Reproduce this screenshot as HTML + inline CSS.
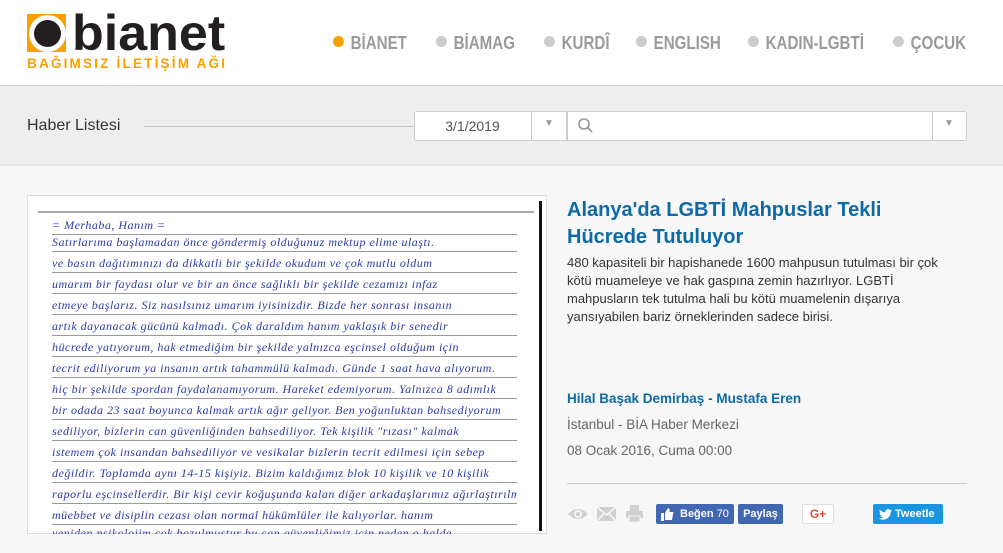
<!DOCTYPE html>
<html><head><meta charset="utf-8"><style>
*{margin:0;padding:0;box-sizing:border-box}
body{width:1003px;height:553px;overflow:hidden;background:#f7f7f7;font-family:"Liberation Sans",sans-serif;position:relative}
.hdr{position:absolute;left:0;top:0;width:1003px;height:86px;background:#fff;border-bottom:1px solid #d0d0d0}
.band{position:absolute;left:0;top:86px;width:1003px;height:80px;background:#eeeeee;border-bottom:2px solid #e2e2e2}
.nav{position:absolute;top:33px;font-weight:bold;font-size:18px;color:#9a9a9a;white-space:nowrap;line-height:20px;transform:scaleX(.84);transform-origin:left}
.nav:before{content:"";display:inline-block;width:13px;height:11px;border-radius:50%;background:#ccc;margin-right:8px;vertical-align:2px}
.nav.on:before{background:#f7a000}
.abs{position:absolute}
.hand{position:absolute;left:52px;width:465px;font-family:"Liberation Serif",serif;font-style:italic;font-size:12px;color:#2a3aa8;border-bottom:1px solid #999;height:17px;line-height:14px;white-space:nowrap;overflow:hidden;letter-spacing:.5px}
.btn{position:absolute;top:504px;height:20px;border-radius:2px;font-size:11px;font-weight:bold;color:#fff;line-height:20px}
</style></head><body>
<div class="hdr"></div>
<div class="abs" style="left:27px;top:14px;width:39px;height:38px;background:#f7a000"></div>
<div class="abs" style="left:29px;top:15px;width:37px;height:37px;border-radius:50%;background:#fff"></div>
<div class="abs" style="left:34px;top:20px;width:27px;height:27px;border-radius:50%;background:#231f20"></div>
<div class="abs" style="left:72px;top:8px;font-size:50px;line-height:50px;color:#231f20;font-weight:bold;transform:scaleX(1.04);transform-origin:left">bianet</div>
<div class="abs" style="left:27px;top:56px;font-size:13.5px;font-weight:bold;color:#f7a000;letter-spacing:2.2px;line-height:16px;white-space:nowrap">BAĞIMSIZ İLETİŞİM AĞI</div>
<div class="nav on" style="left:333px">BİANET</div>
<div class="nav" style="left:436px">BİAMAG</div>
<div class="nav" style="left:544px">KURDÎ</div>
<div class="nav" style="left:636px">ENGLISH</div>
<div class="nav" style="left:748px">KADIN-LGBTİ</div>
<div class="nav" style="left:893px">ÇOCUK</div>
<div class="band"></div>
<div class="abs" style="left:27px;top:117px;font-size:16px;color:#333">Haber Listesi</div>
<div class="abs" style="left:144px;top:126px;width:270px;height:1px;background:#c8c8c8"></div>
<div class="abs" style="left:414px;top:111px;width:153px;height:30px;background:#fff;border:1px solid #ccc;border-radius:3px 0 0 3px"></div>
<div class="abs" style="left:414px;top:118px;width:117px;text-align:center;font-size:14px;color:#555">3/1/2019</div>
<div class="abs" style="left:531px;top:112px;width:1px;height:28px;background:#ccc"></div>
<div class="abs" style="left:544px;top:118px;font-size:10px;color:#999">▼</div>
<div class="abs" style="left:567px;top:111px;width:400px;height:30px;background:#fff;border:1px solid #ccc;border-radius:0 3px 3px 0"></div>
<svg class="abs" style="left:577px;top:117px" width="18" height="18" viewBox="0 0 18 18"><circle cx="7" cy="7" r="5" fill="none" stroke="#999" stroke-width="1.6"/><line x1="10.5" y1="10.5" x2="15" y2="15" stroke="#999" stroke-width="1.8"/></svg>
<div class="abs" style="left:932px;top:112px;width:1px;height:28px;background:#ccc"></div>
<div class="abs" style="left:944px;top:118px;font-size:10px;color:#999">▼</div>
<div class="abs" style="left:27px;top:195px;width:520px;height:339px;background:#fff;border:1px solid #ddd"></div>
<div class="abs" style="left:38px;top:211px;width:496px;height:2px;background:#aaa"></div>
<div class="abs" style="left:539px;top:201px;width:3px;height:330px;background:#111"></div>
<div class="hand" style="top:218px">= Merhaba,          Hanım =</div>
<div class="hand" style="top:235px">          Satırlarıma başlamadan önce göndermiş olduğunuz mektup elime ulaştı.</div>
<div class="hand" style="top:256px">ve basın dağıtımınızı da dikkatli bir şekilde okudum ve çok mutlu oldum</div>
<div class="hand" style="top:277px">umarım bir faydası olur ve bir an önce sağlıklı bir şekilde cezamızı infaz</div>
<div class="hand" style="top:298px">etmeye başlarız. Siz nasılsınız umarım iyisinizdir. Bizde her sonrası insanın</div>
<div class="hand" style="top:319px">artık dayanacak gücünü kalmadı. Çok daraldım      hanım yaklaşık bir senedir</div>
<div class="hand" style="top:340px">hücrede yatıyorum, hak etmediğim bir şekilde yalnızca eşcinsel olduğum için</div>
<div class="hand" style="top:361px">tecrit ediliyorum ya insanın artık tahammülü kalmadı. Günde 1 saat hava alıyorum.</div>
<div class="hand" style="top:382px">hiç bir şekilde spordan faydalanamıyorum. Hareket edemiyorum. Yalnızca 8 adımlık</div>
<div class="hand" style="top:403px">bir odada 23 saat boyunca kalmak artık ağır geliyor. Ben yoğunluktan bahsediyorum</div>
<div class="hand" style="top:424px">sediliyor, bizlerin can güvenliğinden bahsediliyor. Tek kişilik "rızası" kalmak</div>
<div class="hand" style="top:445px">istemem çok insandan bahsediliyor ve vesikalar bizlerin tecrit edilmesi için sebep</div>
<div class="hand" style="top:466px">değildir. Toplamda aynı 14-15 kişiyiz. Bizim kaldığımız blok 10 kişilik ve 10 kişilik</div>
<div class="hand" style="top:487px">raporlu eşcinsellerdir. Bir kişi cevir koğuşunda kalan diğer arkadaşlarımız ağırlaştırılmış</div>
<div class="hand" style="top:508px">müebbet ve disiplin cezası olan normal hükümlüler ile kalıyorlar.      hanım</div>
<div class="hand" style="top:526px;height:8px;border:none">yeniden psikolojim çok bozulmuştur bu can güvenliğimiz için neden o halde</div>
<div class="abs" style="left:567px;top:197px;width:380px;font-size:20px;font-weight:bold;color:#0d6aa6;line-height:27px">Alanya'da LGBTİ Mahpuslar Tekli Hücrede Tutuluyor</div>
<div class="abs" style="left:567px;top:254px;width:385px;font-size:13px;color:#333;line-height:18px">480 kapasiteli bir hapishanede 1600 mahpusun tutulması bir çok kötü muameleye ve hak gaspına zemin hazırlıyor. LGBTİ mahpusların tek tutulma hali bu kötü muamelenin dışarıya yansıyabilen bariz örneklerinden sadece birisi.</div>
<div class="abs" style="left:567px;top:391px;font-size:13.5px;font-weight:bold;color:#0d6aa6">Hilal Başak Demirbaş - Mustafa Eren</div>
<div class="abs" style="left:567px;top:417px;font-size:13.5px;color:#666">İstanbul - BİA Haber Merkezi</div>
<div class="abs" style="left:567px;top:443px;font-size:13.5px;color:#666">08 Ocak 2016, Cuma 00:00</div>
<div class="abs" style="left:567px;top:483px;width:400px;height:1px;background:#ccc"></div>
<svg class="abs" style="left:567px;top:506px" width="22" height="16" viewBox="0 0 22 16"><path d="M1 8 Q11 -2 21 8 Q11 18 1 8Z" fill="#d0d0d0"/><circle cx="11" cy="8" r="4" fill="#f7f7f7"/><circle cx="11" cy="8" r="2.3" fill="#d0d0d0"/></svg>
<svg class="abs" style="left:597px;top:507px" width="19" height="14" viewBox="0 0 19 14"><rect x="0" y="0" width="19" height="14" fill="#d0d0d0"/><path d="M0 0 L9.5 8 L19 0 M0 14 L7 6.5 M19 14 L12 6.5" stroke="#f7f7f7" stroke-width="1.5" fill="none"/></svg>
<svg class="abs" style="left:626px;top:505px" width="17" height="17" viewBox="0 0 17 17"><rect x="4" y="0" width="9" height="6" fill="#d0d0d0"/><rect x="0" y="6" width="17" height="7" rx="1" fill="#d0d0d0"/><rect x="3" y="11" width="11" height="6" fill="#d0d0d0" stroke="#f7f7f7"/></svg>
<div class="btn" style="left:656px;width:78px;background:#4267b2;padding-left:24px">Beğen <span style="font-weight:normal">70</span></div>
<svg class="abs" style="left:661px;top:508px" width="13" height="13" viewBox="0 0 13 13"><rect x="0" y="5" width="3" height="8" fill="#fff"/><path d="M4 5 L7 0 Q9 0 8.5 4 L12 4 Q13 5 12 6 L11 12 L4 12Z" fill="#fff"/></svg>
<div class="btn" style="left:738px;width:45px;background:#4267b2;text-align:center">Paylaş</div>
<div class="btn" style="left:802px;width:32px;background:#fff;border:1px solid #ddd;color:#dd4b39;text-align:center;line-height:18px;font-size:12px">G+</div>
<div class="btn" style="left:873px;width:70px;background:#1b95e0;padding-left:22px">Tweetle</div>
<svg class="abs" style="left:879px;top:509px" width="13" height="11" viewBox="0 0 24 20"><path d="M24 2.4c-.9.4-1.8.7-2.8.8 1-.6 1.8-1.6 2.2-2.7-1 .6-2 1-3.1 1.2C19.3.7 18 0 16.6 0c-2.7 0-4.9 2.2-4.9 4.9 0 .4 0 .8.1 1.1C7.7 5.8 4.1 3.9 1.7.9c-.4.7-.7 1.6-.7 2.5 0 1.7.9 3.2 2.2 4.1-.8 0-1.6-.2-2.2-.6v.1c0 2.4 1.7 4.4 3.9 4.8-.4.1-.8.2-1.3.2-.3 0-.6 0-.9-.1.6 2 2.4 3.4 4.6 3.4-1.7 1.3-3.8 2.1-6.1 2.1-.4 0-.8 0-1.2-.1 2.2 1.4 4.8 2.2 7.5 2.2 9.1 0 14-7.5 14-14v-.6c1-.7 1.8-1.6 2.5-2.5z" fill="#fff"/></svg>
</body></html>
